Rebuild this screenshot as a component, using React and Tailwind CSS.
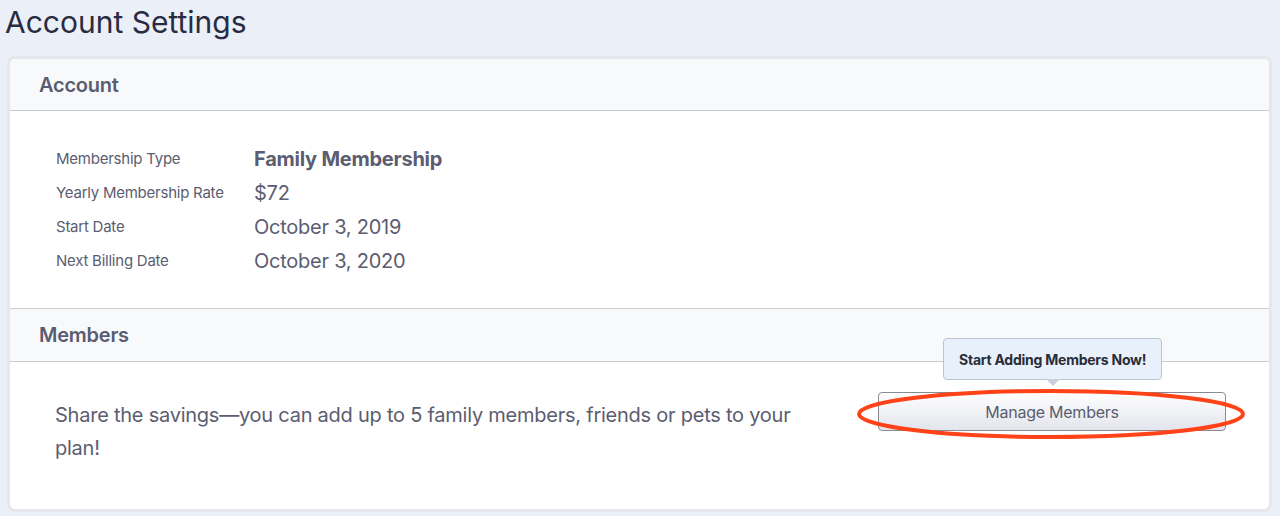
export default function App() {
  const rows = [
    ["Membership Type", "Family Membership", true],
    ["Yearly Membership Rate", "$72", false],
    ["Start Date", "October 3, 2019", false],
    ["Next Billing Date", "October 3, 2020", false],
  ];

  return (
    <div className="min-h-[516px] bg-[#ebeff7] px-[5px] pb-[4px] font-['Inter','Roboto',sans-serif] tracking-[-0.015em]">
      <h1 className="h-[56px] pt-[2px] text-[30px] leading-[40px] tracking-normal text-[#282b42]">Account Settings</h1>

      <div className="ml-[2px] mr-[3px] rounded-[8px] border-[3px] border-[#e5e7ee] bg-white overflow-hidden">
        {/* Account */}
        <div className="h-[52px] border-b border-[#c9cbd1] bg-[#f8f9fb] pl-[29px] flex items-center">
          <h2 className="text-[20px] font-semibold text-[#5a5c70]">Account</h2>
        </div>
        <div className="pl-[46px] pt-[31px] pb-[30px] border-b border-[#c9cbd1]">
          {rows.map(([label, value, bold]) => (
            <div key={label} className="flex items-center h-[34px]">
              <div className="w-[198px] text-[15px] text-[#5b5d70]">{label}</div>
              <div className={`text-[20px] text-[#5b5d70] ${bold ? "font-bold" : ""}`}>{value}</div>
            </div>
          ))}
        </div>

        {/* Members */}
        <div className="h-[53px] border-b border-[#c9cbd1] bg-[#f8f9fb] pl-[29px] flex items-center">
          <h2 className="text-[20px] font-semibold text-[#5a5c70]">Members</h2>
        </div>
        <div className="flex items-start pl-[45px] pr-[43px] pt-[37px] pb-[44px]">
          <p className="w-[760px] text-[20px] leading-[33px] text-[#5b5d70]">
            Share the savings—you can add up to 5 family members, friends or pets to your plan!
          </p>
          <div className="ml-auto relative mt-[-7px]">
            <div className="absolute left-[65px] top-[-54px] z-10">
              <div className="relative rounded-[4px] border border-[#b9c3d1] bg-[#e8f1fb] px-[15px] h-[42px] flex items-center text-[14px] font-bold text-[#2a2c3a] whitespace-nowrap">
                Start Adding Members Now!
                <span className="absolute left-1/2 -translate-x-1/2 bottom-[-7px] w-0 h-0 border-l-[7px] border-r-[7px] border-t-[7px] border-l-transparent border-r-transparent border-t-[#c9d0da]"></span>
              </div>
            </div>
            <button className="w-[348px] h-[39px] rounded-[4px] border border-[#8b8c92] bg-gradient-to-b from-white to-[#e3e5ed] text-[16px] text-[#5b5d70]">
              Manage Members
            </button>
            <svg className="absolute left-[-22px] top-[-3px] pointer-events-none" width="392" height="52" viewBox="0 0 392 52">
              <ellipse cx="195" cy="25" rx="192" ry="23" fill="none" stroke="#ff4217" strokeWidth="4" />
            </svg>
          </div>
        </div>
      </div>
    </div>
  );
}
